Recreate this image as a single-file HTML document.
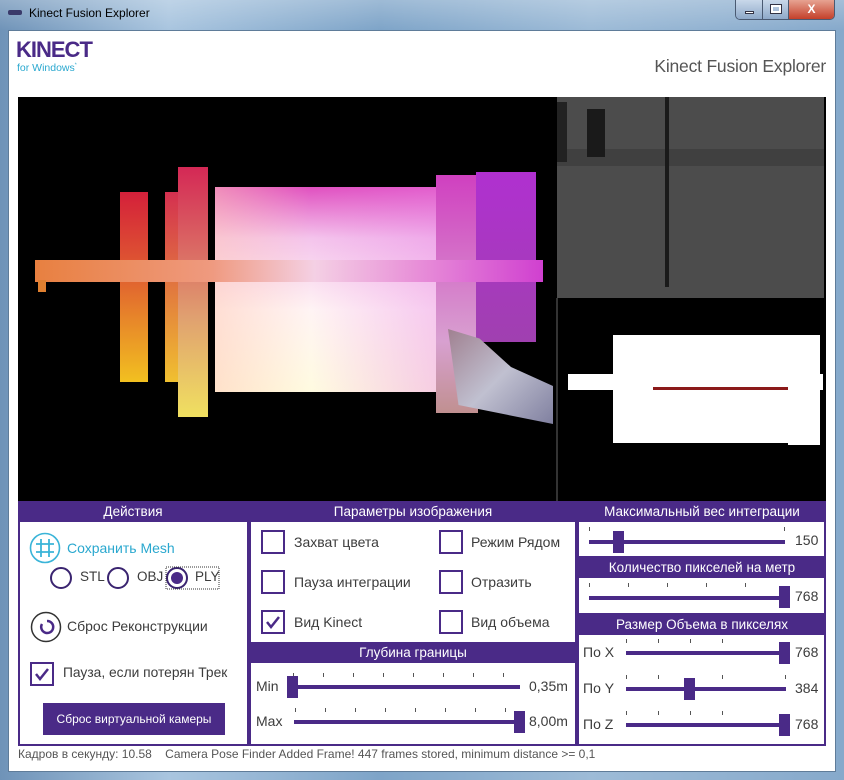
<!DOCTYPE html>
<html><head><meta charset="utf-8"><style>
*{box-sizing:border-box;margin:0;padding:0}
body{width:844px;height:780px;overflow:hidden;position:relative;font-family:"Segoe UI","Liberation Sans","DejaVu Sans",sans-serif;background:linear-gradient(90deg,#6f93b8 0%,#a9c5df 20%,#7ea4c8 45%,#9dbbd7 70%,#86a9cb 100%)}
.a{position:absolute}
.client{left:8px;top:30px;width:828px;height:742px;background:#fff;border:1px solid #5f7c99}
.hdr{background:#4a2a87;color:#fff;font-size:13.5px;text-align:center;line-height:20px}
.t{font-size:14px;color:#3c3c3c;white-space:nowrap}
.cb{width:24px;height:24px;border:2px solid #4a2a87;background:#fff}
.track{height:4px;background:#4a2a87}
.thumb{width:11px;height:22px;background:#4a2a87}
.tk{position:absolute;width:1px;height:4px;background:#555}
</style></head><body>
<div class="a" style="left:0;top:0;width:844px;height:30px;background:linear-gradient(180deg,rgba(255,255,255,.25),rgba(255,255,255,0))"></div>
<div class="a" style="left:8px;top:10px;width:14px;height:5px;background:#3a3a6a;border-radius:2px"></div>
<div class="a" style="left:29px;top:6px;font-size:12px;color:#000">Kinect Fusion Explorer</div>
<div class="a" style="left:735px;top:0;width:100px;height:20px;border:1px solid #4a5a72;border-top:none;border-radius:0 0 5px 5px;overflow:hidden;display:flex">
<div style="width:27px;background:linear-gradient(#c9d8ea,#8ea9c9);border-right:1px solid #4a5a72;position:relative"><div class="a" style="left:9px;top:11px;width:9px;height:3px;background:#fff;border:1px solid #334"></div></div>
<div style="width:26px;background:linear-gradient(#c9d8ea,#8ea9c9);border-right:1px solid #4a5a72;position:relative"><div class="a" style="left:8px;top:5px;width:10px;height:8px;border:2px solid #fff;outline:1px solid #334"></div></div>
<div style="flex:1;background:linear-gradient(#e7a392,#c4402a);color:#fff;font-weight:bold;font-size:12px;text-align:center;line-height:18px">X</div>
</div>
<div class="a client"></div>
<div class="a" style="left:16px;top:37px;font-size:22px;font-weight:bold;color:#4a2a87;letter-spacing:-1px">KINECT</div>
<div class="a" style="left:17px;top:62px;font-size:10.5px;color:#2aa8cf">for Windows<sup style="font-size:5px">*</sup></div>
<div class="a" style="right:18px;top:56px;font-size:17.5px;color:#555;letter-spacing:-0.2px">Kinect Fusion Explorer</div>

<!-- image -->
<div class="a" style="left:18px;top:97px;width:808px;height:404px;background:#000;overflow:hidden">
<div class="a" style="left:539px;top:0;width:267px;height:201px;background:#4c4c4c"></div>
<div class="a" style="left:539px;top:52px;width:267px;height:17px;background:#404040"></div>
<div class="a" style="left:569px;top:12px;width:18px;height:48px;background:#1a1a1a"></div>
<div class="a" style="left:539px;top:5px;width:10px;height:60px;background:#222"></div>
<div class="a" style="left:647px;top:0;width:4px;height:190px;background:#1a1a1a"></div>
<div class="a" style="left:538px;top:201px;width:2px;height:203px;background:#333"></div>
<div class="a" style="left:595px;top:238px;width:180px;height:108px;background:#fff"></div>
<div class="a" style="left:550px;top:277px;width:255px;height:16px;background:#fff"></div>
<div class="a" style="left:635px;top:290px;width:150px;height:3px;background:#8b1a1a"></div>
<div class="a" style="left:770px;top:238px;width:32px;height:110px;background:#fff"></div>
<div class="a" style="left:102px;top:95px;width:28px;height:190px;background:linear-gradient(#d4203a,#e06030 45%,#f2c020)"></div>
<div class="a" style="left:147px;top:95px;width:30px;height:190px;background:linear-gradient(#d43050,#e07040 45%,#f0c030)"></div>
<div class="a" style="left:160px;top:70px;width:30px;height:250px;background:linear-gradient(#d42855,#e0a070 60%,#f0e060)"></div>
<div class="a" style="left:197px;top:90px;width:240px;height:205px;background:linear-gradient(180deg,#e050c0 0%,#f4c4ec 25%,#fff4f4 60%,#fffbe0 100%)"></div>
<div class="a" style="left:197px;top:90px;width:240px;height:205px;background:linear-gradient(90deg,rgba(255,200,180,.5),rgba(255,255,255,0) 40%,rgba(230,120,230,.4))"></div>
<div class="a" style="left:418px;top:78px;width:42px;height:238px;background:linear-gradient(#d040c0,#d8a0d0 70%,#c09090)"></div>
<div class="a" style="left:458px;top:75px;width:60px;height:170px;background:linear-gradient(#b030d0,#a040b0)"></div>
<div class="a" style="left:17px;top:163px;width:508px;height:22px;background:linear-gradient(90deg,#e88040,#ef9a80 35%,#f4d0e4 55%,#e890d8 75%,#d040d0)"></div>
<div class="a" style="left:20px;top:183px;width:8px;height:12px;background:#e08030"></div>
<div class="a" style="left:430px;top:232px;width:105px;height:95px;background:linear-gradient(135deg,#a08090,#c0c0d0 50%,#8080a0);clip-path:polygon(0 0,30% 10%,60% 40%,100% 60%,100% 100%,10% 80%)"></div>
</div>

<!-- panels -->
<div class="a" style="left:18px;top:501px;width:808px;height:245px;background:#4a2a87"></div>
<div class="a hdr" style="left:18px;top:502px;width:230px">Действия</div>
<div class="a hdr" style="left:250px;top:502px;width:326px">Параметры изображения</div>
<div class="a hdr" style="left:578px;top:502px;width:248px">Максимальный вес интеграции</div>
<div class="a" style="left:20px;top:522px;width:227px;height:222px;background:#fff"></div>
<div class="a" style="left:251px;top:522px;width:324px;height:120px;background:#fff"></div>
<div class="a hdr" style="left:250px;top:643px;width:326px">Глубина границы</div>
<div class="a" style="left:251px;top:663px;width:324px;height:81px;background:#fff"></div>
<div class="a" style="left:579px;top:522px;width:245px;height:34px;background:#fff"></div>
<div class="a hdr" style="left:578px;top:558px;width:248px">Количество пикселей на метр</div>
<div class="a" style="left:579px;top:578px;width:245px;height:35px;background:#fff"></div>
<div class="a hdr" style="left:578px;top:615px;width:248px">Размер Объема в пикселях</div>
<div class="a" style="left:579px;top:635px;width:245px;height:109px;background:#fff"></div>

<!-- left content -->
<svg class="a" style="left:29px;top:532px" width="32" height="32" viewBox="0 0 32 32"><circle cx="16" cy="16" r="14.5" fill="none" stroke="#3ab4d8" stroke-width="1.6"/><path d="M12 7v18M20 7v18M7 12h18M7 20h18" stroke="#3ab4d8" stroke-width="1.8"/></svg>
<div class="a t" style="left:67px;top:540px;color:#2aa8cf">Сохранить Mesh</div>
<svg class="a" style="left:50px;top:566px" width="175" height="24"><circle cx="11" cy="12" r="10" fill="none" stroke="#3a2470" stroke-width="2"/><circle cx="68" cy="12" r="10" fill="none" stroke="#3a2470" stroke-width="2"/><circle cx="127" cy="12" r="10" fill="none" stroke="#3a2470" stroke-width="2"/><circle cx="127" cy="12" r="6" fill="#4a2a87"/><rect x="116" y="1" width="53" height="22" fill="none" stroke="#333" stroke-dasharray="1,1"/></svg>
<div class="a t" style="left:80px;top:569px;font-size:13.5px">STL</div>
<div class="a t" style="left:137px;top:569px;font-size:13.5px">OBJ</div>
<div class="a t" style="left:195px;top:569px;font-size:13.5px">PLY</div>
<svg class="a" style="left:30px;top:611px" width="32" height="32"><circle cx="16" cy="16" r="14.5" fill="none" stroke="#333" stroke-width="1.5"/><path d="M12 13a6 6 0 1 0 5-3" fill="none" stroke="#4a2a87" stroke-width="2.5"/></svg>
<div class="a t" style="left:67px;top:618px">Сброс Реконструкции</div>
<div class="a cb" style="left:30px;top:662px"><svg width="20" height="20"><path d="M4 10l4 5 8-10" fill="none" stroke="#4a2a87" stroke-width="2.5"/></svg></div>
<div class="a t" style="left:63px;top:665px;font-size:13.8px">Пауза, если потерян Трек</div>
<div class="a" style="left:43px;top:703px;width:182px;height:32px;background:#4a2a87;color:#fff;font-size:12px;text-align:center;line-height:32px">Сброс виртуальной камеры</div>

<!-- middle checkboxes -->
<div class="a cb" style="left:261px;top:530px"></div><div class="a t" style="left:294px;top:534px">Захват цвета</div>
<div class="a cb" style="left:261px;top:570px"></div><div class="a t" style="left:294px;top:574px">Пауза интеграции</div>
<div class="a cb" style="left:261px;top:610px"><svg width="20" height="20"><path d="M4 10l4 5 8-10" fill="none" stroke="#4a2a87" stroke-width="2.5"/></svg></div><div class="a t" style="left:294px;top:614px">Вид Kinect</div>
<div class="a cb" style="left:439px;top:530px"></div><div class="a t" style="left:471px;top:534px">Режим Рядом</div>
<div class="a cb" style="left:439px;top:570px"></div><div class="a t" style="left:471px;top:574px">Отразить</div>
<div class="a cb" style="left:439px;top:610px"></div><div class="a t" style="left:471px;top:614px">Вид объема</div>

<!-- ticks -->
<div class="tk" style="left:293px;top:673px"></div><div class="tk" style="left:323px;top:673px"></div><div class="tk" style="left:353px;top:673px"></div><div class="tk" style="left:383px;top:673px"></div><div class="tk" style="left:413px;top:673px"></div><div class="tk" style="left:443px;top:673px"></div><div class="tk" style="left:473px;top:673px"></div><div class="tk" style="left:503px;top:673px"></div>
<div class="tk" style="left:295px;top:708px"></div><div class="tk" style="left:325px;top:708px"></div><div class="tk" style="left:355px;top:708px"></div><div class="tk" style="left:385px;top:708px"></div><div class="tk" style="left:415px;top:708px"></div><div class="tk" style="left:445px;top:708px"></div><div class="tk" style="left:475px;top:708px"></div><div class="tk" style="left:505px;top:708px"></div>
<div class="tk" style="left:589px;top:527px"></div><div class="tk" style="left:784px;top:527px"></div>
<div class="tk" style="left:589px;top:583px"></div><div class="tk" style="left:628px;top:583px"></div><div class="tk" style="left:667px;top:583px"></div><div class="tk" style="left:706px;top:583px"></div><div class="tk" style="left:745px;top:583px"></div>
<div class="tk" style="left:626px;top:639px"></div><div class="tk" style="left:658px;top:639px"></div><div class="tk" style="left:690px;top:639px"></div><div class="tk" style="left:722px;top:639px"></div>
<div class="tk" style="left:626px;top:675px"></div><div class="tk" style="left:658px;top:675px"></div><div class="tk" style="left:722px;top:675px"></div><div class="tk" style="left:785px;top:675px"></div>
<div class="tk" style="left:626px;top:711px"></div><div class="tk" style="left:658px;top:711px"></div><div class="tk" style="left:690px;top:711px"></div><div class="tk" style="left:722px;top:711px"></div>

<!-- depth sliders -->
<div class="a t" style="left:256px;top:678px">Min</div>
<div class="a track" style="left:288px;top:685px;width:232px"></div>
<div class="a thumb" style="left:287px;top:676px"></div>
<div class="a t" style="left:529px;top:678px">0,35m</div>
<div class="a t" style="left:256px;top:713px">Max</div>
<div class="a track" style="left:294px;top:720px;width:226px"></div>
<div class="a thumb" style="left:514px;top:711px"></div>
<div class="a t" style="left:529px;top:713px">8,00m</div>

<!-- right sliders -->
<div class="a track" style="left:589px;top:540px;width:196px"></div><div class="a thumb" style="left:613px;top:531px"></div><div class="a t" style="left:795px;top:532px">150</div>
<div class="a track" style="left:589px;top:596px;width:196px"></div><div class="a thumb" style="left:779px;top:586px"></div><div class="a t" style="left:795px;top:588px">768</div>
<div class="a t" style="left:583px;top:644px">По X</div><div class="a track" style="left:626px;top:651px;width:160px"></div><div class="a thumb" style="left:779px;top:642px"></div><div class="a t" style="left:795px;top:644px">768</div>
<div class="a t" style="left:583px;top:680px">По Y</div><div class="a track" style="left:626px;top:687px;width:160px"></div><div class="a thumb" style="left:684px;top:678px"></div><div class="a t" style="left:795px;top:680px">384</div>
<div class="a t" style="left:583px;top:716px">По Z</div><div class="a track" style="left:626px;top:723px;width:160px"></div><div class="a thumb" style="left:779px;top:714px"></div><div class="a t" style="left:795px;top:716px">768</div>

<div class="a" style="left:18px;top:747px;font-size:12px;color:#555;white-space:nowrap">Кадров в секунду: 10.58&nbsp;&nbsp;&nbsp; Camera Pose Finder Added Frame! 447 frames stored, minimum distance &gt;= 0,1</div>
</body></html>
